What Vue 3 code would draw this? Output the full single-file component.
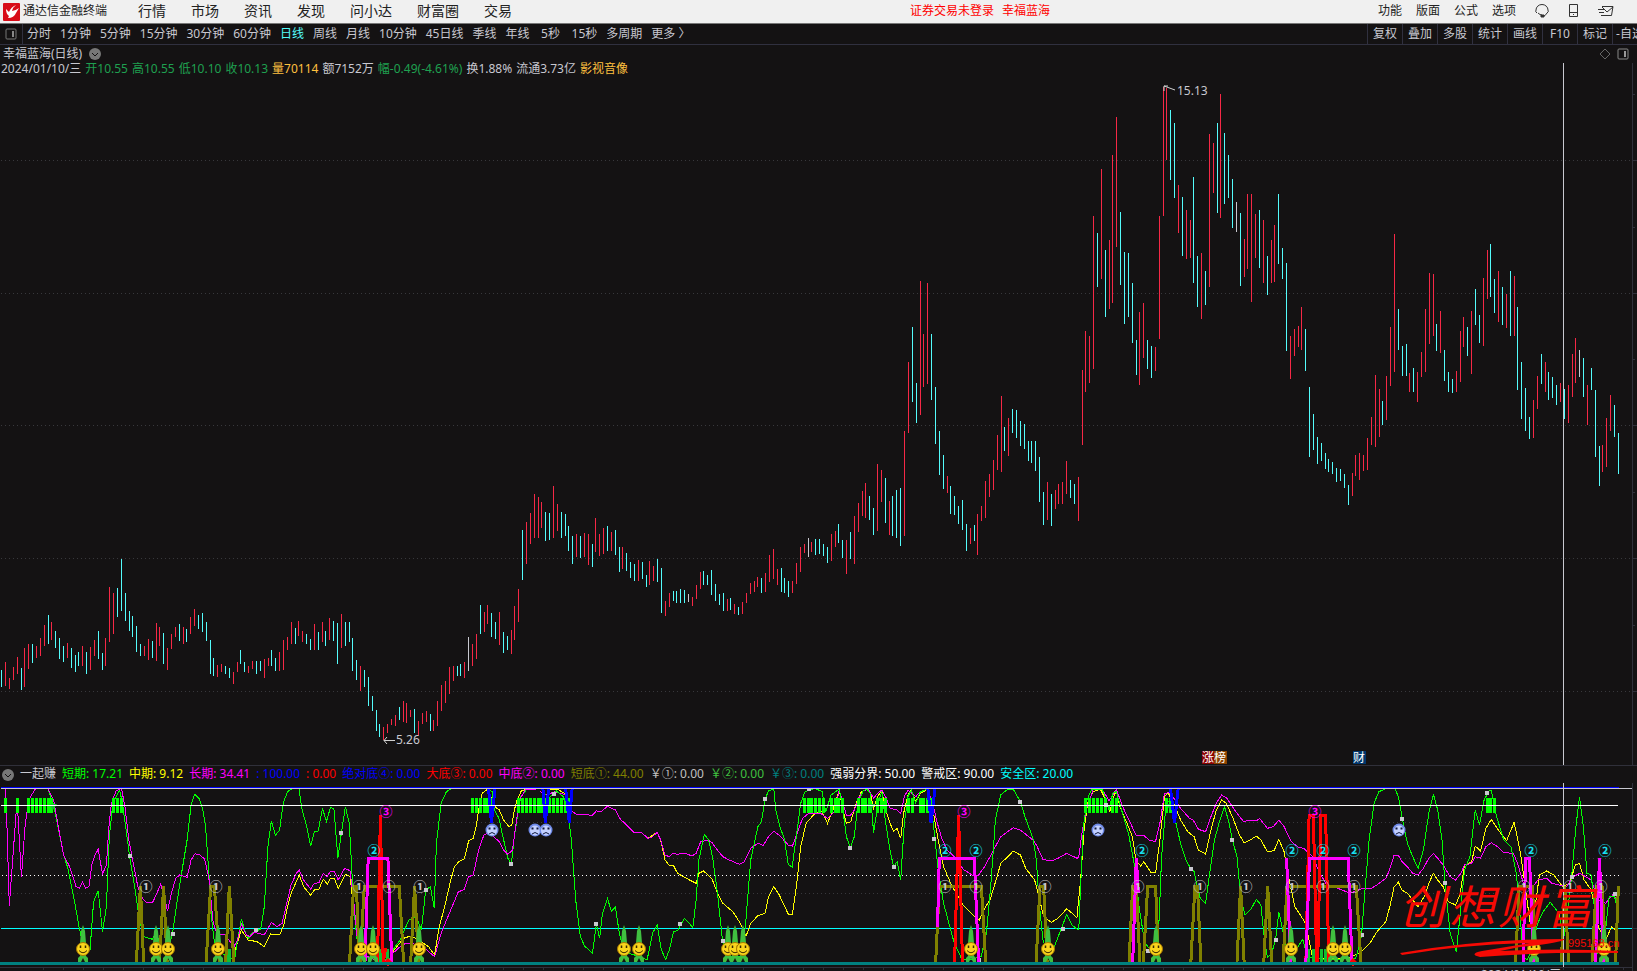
<template>
  <div class="terminal">
    <header class="titlebar">
      <svg class="logo" viewBox="0 0 17 18" aria-hidden="true">
        <rect width="17" height="18" rx="1" fill="#d80c18" />
        <path d="M13 2 Q8 4 6 9 L3 6 Q3 11 6 13 L5 15 Q11 15 13 10 L16 5 Q12 8 9 8 Q10 4 13 2 Z" fill="#fff" />
      </svg>
      <span class="app-name">通达信金融终端</span>
      <nav class="main-menu">
        <button v-for="m in menus" :key="m" type="button">{{ m }}</button>
      </nav>
      <div class="notice"><span>证券交易未登录</span><span>幸福蓝海</span></div>
      <nav class="side-menu">
        <button v-for="m in sideMenus" :key="m" type="button">{{ m }}</button>
      </nav>
      <div class="title-icons">
        <button type="button" aria-label="客服">
          <svg width="16" height="16" viewBox="0 0 16 16" fill="none" stroke="#333">
            <path d="M3 10 Q1 9 2 7 A6 5.500 0 0 1 14 7 Q15 9 13 10 M4 10 Q6 12 8 12 M13 10 Q12 12 10 13" />
            <path d="M7 12 h3 v2 h-3 Z" fill="#333" />
          </svg>
        </button>
        <button type="button" aria-label="手机">
          <svg width="16" height="16" viewBox="0 0 16 16" fill="none" stroke="#333">
            <path d="M3.500 1.500 h8 v12 h-8 Z M3.500 9.500 h8 M7 11.500 h1" />
          </svg>
        </button>
        <button type="button" aria-label="邮件">
          <svg width="16" height="16" viewBox="0 0 16 16" fill="none" stroke="#333">
            <path d="M4 3.500 H15 L13.500 12.500 H3 M4 4 L9 9 L15 4 M0 6.500 h6 M1 9.500 h5" />
          </svg>
        </button>
      </div>
    </header>

    <div class="toolbar">
      <button class="pane-btn" type="button" aria-label="侧栏">
        <svg width="12" height="12" viewBox="0 0 12 12">
          <rect x="1" y="1" width="10" height="10" rx="1" fill="none" stroke="#777" />
          <rect x="7" y="3" width="2" height="6" fill="#888" />
        </svg>
      </button>
      <div class="periods">
        <button
          v-for="p in periods"
          :key="p"
          type="button"
          :class="{ active: p === '日线' }"
        >{{ p }}</button>
      </div>
      <div class="tools">
        <button v-for="t in tools" :key="t" type="button">{{ t }}</button>
      </div>
    </div>

    <main>
      <section class="price-panel">
        <div class="stock-title">
          <span>幸福蓝海(日线)</span>
          <svg class="chevron" viewBox="0 0 12 12" aria-hidden="true">
            <circle cx="6" cy="6" r="6" fill="#777" />
            <path d="M3 5 L6 8 L9 5" fill="none" stroke="#141213" />
          </svg>
          <svg class="corner" width="30" height="12" viewBox="0 0 30 12" fill="none" aria-hidden="true">
            <path d="M6 1 L11 6 L6 11 L1 6 Z" stroke="#666" />
            <rect x="19" y="1" width="10" height="10" rx="1" stroke="#888" />
            <rect x="25" y="3" width="2" height="6" fill="#999" />
          </svg>
        </div>
        <div class="quote">
          <span v-for="q in quote" :key="q.text" :class="q.tone">{{ q.text }}</span>
        </div>
        <svg class="canvas" viewBox="0 63 1637 702">
          <g class="grid">
            <line v-for="y in [160, 293, 425, 558, 691]" :key="y" x1="1" x2="1637" :y1="y + 0.5" :y2="y + 0.5" />
          </g>
          <g class="bars">
            <rect
              v-for="b in candles"
              :key="b.x"
              :x="b.x"
              :y="b.top"
              width="1"
              :height="b.height"
              :class="b.tone"
            />
          </g>
          <path class="frame" d="M1632.500 63 V765 M1633 94.500 h2 M1633 160.500 h4 M1633 227.500 h2 M1633 293.500 h4 M1633 359.500 h2 M1633 425.500 h4 M1633 492.500 h2 M1633 558.500 h4 M1633 625.500 h2 M1633 691.500 h4" />
          <line class="cross" x1="1563.500" x2="1563.500" y1="63" y2="765" />
          <path class="pointer" d="M1164 86 L1175 90 M1164 91 V86 H1168 M384 740.500 H395 M387 737 L384 740.500 L387 744" />
          <text class="mark" x="1177" y="95">15.13</text>
          <text class="mark" x="396" y="744">5.26</text>
          <g class="badges">
            <rect x="1202" y="751" width="12" height="13" fill="#8b0000" />
            <rect x="1214" y="751" width="13" height="13" fill="#8a4200" />
            <rect x="1353" y="751" width="13" height="13" fill="#00376e" />
            <text x="1202" y="762">涨榜</text>
            <text x="1353" y="762">财</text>
          </g>
        </svg>
      </section>

      <section class="indicator-panel">
        <div class="legend">
          <svg class="chevron" viewBox="0 0 12 12" aria-hidden="true">
            <circle cx="6" cy="6" r="6" fill="#777" />
            <path d="M3 5 L6 8 L9 5" fill="none" stroke="#141213" />
          </svg>
          <span v-for="l in legend" :key="l[0]" :style="{ color: l[1] }">{{ l[0] }}</span>
        </div>
        <svg class="canvas" viewBox="0 783 1637 188">
          <g class="grid">
            <line v-for="y in [822, 858, 893]" :key="y" x1="1" x2="1637" :y1="y + 0.5" :y2="y + 0.5" />
          </g>
          <line class="half" x1="2" x2="1620" y1="875.500" y2="875.500" />
          <rect x="1" y="928" width="1631" height="1" fill="#0ff" />

          <g class="curves">
            <polyline v-for="(c, i) in curves" :key="i" :points="c.points" :stroke="c.color" />
          </g>
          <g class="blocks">
            <rect v-for="x in hotBars" :key="x" :x="x" y="798" width="3" height="15" />
          </g>
          <g fill="#10c030">
            <path v-for="x in [53, 545, 871, 1170]" :key="x" :d="`M${x - 4} 804 h8 l-4 6 Z`" />
            <path d="M227 949 h4 v13 h-4 Z M379 949 h3 v13 h-3 Z M386 949 h3 v13 h-3 Z M1307 949 h3 v13 h-3 Z M1312 949 h3 v13 h-3 Z M1320 949 h3 v13 h-3 Z M1324 949 h3 v13 h-3 Z" />
          </g>
          <g class="dots">
            <rect v-for="(d, i) in dots" :key="i" :x="d.x - 2" :y="d.y - 2" width="4" height="4" />
          </g>
          <g class="towers">
            <polyline v-for="(t, i) in towers" :key="i" :points="t.points" :stroke="t.color" />
          </g>
          <path d="M384 962 l4 -4 l4 4 Z M1349 962 l4 -4 l4 4 Z M387 964 h2 v2 h-2 Z M1352 964 h2 v2 h-2 Z" fill="red" />

          <rect x="1" y="787" width="1618" height="1" fill="#00f" />
          <rect x="1" y="788" width="1631" height="1" fill="#c8c8d0" />
          <rect x="1" y="805" width="1617" height="1" fill="#fff" />
          <rect x="0" y="962" width="1619" height="3" fill="#008080" />

          <g v-for="x in smiles" :key="'s' + x" :transform="`translate(${x} 949)`">
            <path d="M0 -24 L2 -18 L3 -6 L3 7 L5 9 V13 H2 L0 9 L-2 13 H-5 V9 L-3 7 L-3 -6 L-2 -18 Z" fill="#40c040" />
            <circle r="6.500" fill="#fbd51c" stroke="#a87800" />
            <path d="M-2.500 -3.500 V-1 M2.500 -3.500 V-1" stroke="#3a2a00" stroke-width="1.500" />
            <path d="M-4 1.500 Q0 6 4 1.500" stroke="#3a2a00" fill="none" />
          </g>
          <g v-for="x in frowns" :key="'f' + x" :transform="`translate(${x} 830)`">
            <circle r="6.500" fill="#6f8ae8" />
            <ellipse cy="0.500" rx="5" ry="5" fill="#c3d0ff" />
            <path d="M-3.500 -1.500 h2 M1.500 -1.500 h2" stroke="#101840" stroke-width="2" />
            <path d="M-3 4 Q0 1 3 4" stroke="#101840" fill="none" />
          </g>

          <g class="rank">
            <text v-for="x in rank1" :key="'a' + x" :x="x" y="891" fill="#c8c8d0">①</text>
            <text v-for="x in rank2" :key="'b' + x" :x="x" y="855" fill="#18e0f0">②</text>
            <text v-for="x in rank3" :key="'c' + x" :x="x" y="816" fill="#ff00ff">③</text>
          </g>

          <path class="frame" :d="timeTicks" />
          <path class="frame" d="M1632.500 783 V971 M1633 822.500 h4 M1633 858.500 h4 M1633 893.500 h4 M1633 928.500 h4" />
          <line class="cross" x1="1563.500" x2="1563.500" y1="783" y2="967" />
          <text class="cursor-date" x="1481" y="979">2024/01/10/三</text>

          <g fill="#f60a04">
            <text v-for="b in brand" :key="b.char" class="brand" :x="b.x" y="924">{{ b.char }}</text>
            <path d="M1400 953 Q1480 939 1565 939 Q1562 943 1520 947 L1500 951 Q1560 948 1618 951 V953 Q1540 952 1480 957 Q1468 954 1482 951 L1530 943 Q1460 945 1402 955 Z" />
            <text class="site" x="1568" y="947">995168.cn</text>
          </g>
        </svg>
      </section>
    </main>
  </div>
</template>

<script setup>
const menus = ['行情', '市场', '资讯', '发现', '问小达', '财富圈', '交易']
const sideMenus = ['功能', '版面', '公式', '选项']
const periods = [
  '分时', '1分钟', '5分钟', '15分钟', '30分钟', '60分钟', '日线', '周线', '月线',
  '10分钟', '45日线', '季线', '年线', '5秒', '15秒', '多周期', '更多 〉'
]
const tools = ['复权', '叠加', '多股', '统计', '画线', 'F10', '标记', '-自选']

const quote = [
  { text: '2024/01/10/三', tone: 'plain' },
  { text: '开10.55', tone: 'fall' },
  { text: '高10.55', tone: 'fall' },
  { text: '低10.10', tone: 'fall' },
  { text: '收10.13', tone: 'fall' },
  { text: '量70114', tone: 'gold' },
  { text: '额7152万', tone: 'plain' },
  { text: '幅-0.49(-4.61%)', tone: 'fall' },
  { text: '换1.88%', tone: 'plain' },
  { text: '流通3.73亿', tone: 'plain' },
  { text: '影视音像', tone: 'gold' }
]

const legend = [
  ['一起赚', '#c8c8d0'],
  ['短期: 17.21', '#00ff00'],
  ['中期: 9.12', '#ffff00'],
  ['长期: 34.41', '#ff00ff'],
  [': 100.00', '#0000ff'],
  [': 0.00', '#ff0000'],
  ['绝对底④: 0.00', '#0000ff'],
  ['大底③: 0.00', '#ff0000'],
  ['中底②: 0.00', '#ff00ff'],
  ['短底①: 44.00', '#808000'],
  ['￥①: 0.00', '#c0c0c0'],
  ['￥②: 0.00', '#40c040'],
  ['￥③: 0.00', '#008080'],
  ['强弱分界: 50.00', '#ffffff'],
  ['警戒区: 90.00', '#ffffff'],
  ['安全区: 20.00', '#00ffff']
]

const brand = [
  { char: '创', x: 1399 },
  { char: '想', x: 1449 },
  { char: '财', x: 1498 },
  { char: '富', x: 1547 }
]

// 每根K线: 涨跌(r涨 c跌 w平) + 最高点,最低点
const STEP = 3.858
const raw = `
c670,687 r662,686 r678,689 r667,680 r657,674 c668,690 r648,687 r644,669 c644,663 r646,658
r638,656 r625,646 c615,644 r622,640 c631,648 c638,659 c646,662 r643,658 c648,668 c655,672
c652,666 r646,666 c652,674 r647,670 r640,656 c631,659 c653,670 r638,666 r587,642 r593,634
c588,617 c559,611 c593,621 c611,631 c616,637 c626,652 c644,656 r646,656 r639,660 c641,658
r623,661 r627,646 c633,664 r648,670 r634,649 r627,637 c624,641 r627,644 c629,642 r617,634
r609,626 c615,629 c613,632 c622,641 c640,674 c658,676 r665,677 r664,672 c666,674 c668,678
r672,684 r662,672 c650,664 c662,672 r666,673 r661,669 c661,674 c661,671 r659,678 r658,666
c650,666 c658,671 r652,671 r640,670 r637,650 r622,644 c628,644 r621,636 r631,642 c634,644
c639,650 r624,650 c632,650 r622,642 c631,646 r618,640 c621,641 c623,664 r614,648 c622,646
c622,642 c638,671 c660,680 r666,691 c670,687 c677,706 c696,711 c710,731 c724,737 r727,740
r724,733 r719,725 r715,726 c707,720 r701,722 r703,723 r710,717 c709,733 r721,736 r713,724
r711,722 c714,731 r720,731 r701,726 r685,711 r681,703 r667,694 r666,681 c666,676 c664,676
r662,678 w637,671 r644,666 r634,659 c605,634 r612,632 r605,624 c613,637 c622,639 r612,645
c632,653 c636,650 r630,654 r606,640 r589,622 c530,580 r522,564 r513,544 r494,538 r497,538
r502,528 c512,541 c513,540 r486,538 r504,531 c512,538 c514,536 c526,551 c536,564 r534,557
c536,558 r533,557 r534,565 c544,567 r518,552 r534,556 r528,554 c526,551 r532,551 c530,555
c547,572 r547,569 c553,571 c562,578 c564,581 r560,581 c562,579 c575,587 r561,585 r566,581
c559,582 c568,613 r601,616 r593,607 c591,601 c591,603 c589,603 c590,603 w594,602 r597,606
r585,599 r572,589 c571,585 c575,585 c570,595 c584,601 c594,605 c593,611 r599,611 c598,610
r604,614 c607,615 r602,614 r593,603 r583,594 r581,592 r577,587 c578,593 r573,592 r555,582
r549,579 r569,585 c568,592 c578,593 c581,597 r581,593 r563,584 r547,572 r544,553 w538,557
r542,552 c539,555 c539,554 c544,556 c547,563 r534,561 r531,547 c524,543 c540,558 r540,574
c532,559 r516,564 r503,532 r491,516 r483,518 c496,520 c508,535 r464,531 r470,502 c478,523
r501,535 c496,536 c490,538 c488,546 r431,536 r362,433 c327,402 c383,423 r281,415 r334,387
r283,384 c334,400 c387,444 c431,475 c455,489 r476,493 c486,514 c496,515 c506,524 c500,530
c524,551 r528,544 c525,541 r514,555 r506,521 r481,518 r474,497 r460,490 r435,470 r396,472
c427,451 r418,456 c409,433 c410,438 c421,446 c424,449 c441,461 c441,463 c441,471 c457,502
c492,525 r482,520 c494,526 r490,509 r484,504 r482,504 r461,494 c480,498 c484,504 r477,521
r370,445 r331,392 r336,383 r216,369 c233,287 r169,279 c250,317 r240,309 r155,303 r117,247
c212,285 c252,324 c253,317 c283,343 c340,375 r312,385 r303,358 c340,369 c346,378 r347,371
r216,339 r87,216 r88,160 c110,180 c123,198 r185,233 c197,256 r210,259 r220,258 c177,283
c256,307 r253,319 c271,305 r134,287 r143,193 c123,213 r94,218 c133,204 c155,198 c179,228
w202,232 c213,286 r239,277 r194,269 r194,302 r214,258 c210,268 r220,283 c256,295 r240,283
r225,282 c194,264 c248,279 c263,351 r336,379 r329,356 r326,347 r307,350 c329,371 c387,457
c414,450 c437,464 c443,461 c453,469 c459,472 c462,474 c468,482 c469,481 c474,488 c485,505
r473,496 r455,476 r453,480 r455,471 r438,470 r417,445 r375,447 r389,437 c401,425 r376,420
r327,386 r234,372 c309,350 c346,376 c344,376 r373,392 c368,392 r372,402 r352,377 r309,372
r273,344 r274,336 c324,351 r311,353 c350,381 c372,392 c379,393 r371,392 r331,382 r317,347
c327,356 r311,374 c289,325 c315,343 r278,346 r250,299 c244,297 c279,313 r271,322 c287,325
r294,328 c271,336 r276,336 c307,390 c362,419 c388,431 c417,439 r400,438 r376,409 c354,384
r362,392 c372,400 c377,398 c385,405 r383,402 c389,419 r385,423 r354,397 r338,383 w350,377
c358,397 r385,425 c368,390 c390,457 c446,486 r445,472 r418,467 r395,431 c405,437 c433,474`

const tones = { r: 'up', c: 'down', w: 'flat' }
const candles = raw.trim().split(/\s+/).map((item, i) => {
  const [top, bottom] = item.slice(1).split(',').map(Number)
  return { x: Math.floor(i * STEP + 1.8), top, height: bottom - top, tone: tones[item[0]] }
})

// 指标采样分三段, 每段有自己的原点, 横向2.8格/px, 纵向3格/px
const origins = [[0, 760], [540, 760], [1077, 740]]
const place = (part, x, y) => ({
  x: Math.round((origins[part][0] + x / 2.8) * 10) / 10,
  y: Math.round((origins[part][1] + y / 3) * 10) / 10
})
const trace = (part, text) =>
  text.trim().split(/\s+/).map((p) => {
    const [x, y] = p.split(',').map(Number)
    const at = place(part, x, y)
    return `${at.x},${at.y}`
  }).join(' ')

const LIME = '#00ff00'
const YELLOW = '#ffff00'
const PINK = '#ff00ff'
const OLIVE = '#808000'

const curves = [
  [0, YELLOW, '657,575 676,510 695,540 720,545 740,560 757,522 783,525 795,495 805,440 815,400 838,345 850,380 870,406 880,390 893,388 905,358 917,372 925,355 937,357 947,385 967,343 980,350 990,440 1000,530 1012,580 1050,600 1090,600 1100,575 1130,535 1150,528 1172,540 1200,560 1217,585 1230,500 1245,440 1260,370 1272,320 1285,305 1300,297 1312,243 1325,235 1333,200 1340,150 1350,100 1367,86 1378,120 1390,145 1397,148 1410,180 1425,200 1433,195 1440,150 1448,120 1460,92 1480,87 1512,86'],
  [0, LIME, '133,83 150,135 165,215 178,285 190,325 208,420 222,505 235,565 252,570 262,425 275,392 287,515 298,440 306,230 316,130 335,90 343,130 363,288 380,400 390,480 403,530 427,538 437,515 450,560 470,570 483,522 495,430 510,330 524,240 535,135 545,103 557,115 567,145 575,195 585,340 592,470 600,545 620,580 657,600 665,540 676,478 688,520 695,536 705,520 718,512 730,508 740,440 750,260 760,182 771,226 783,210 793,130 805,95 820,85 837,85 846,150 858,195 870,258 880,215 891,213 903,145 914,185 925,143 935,145 946,295 956,218 967,140 978,190 985,330 992,460 1000,540 1020,590 1090,600 1100,570 1120,540 1145,480 1165,470 1180,510 1192,390 1205,380 1216,445 1222,250 1235,130 1250,95 1265,85 1365,85 1378,95 1385,150 1397,175 1408,230 1422,295 1432,313 1440,230 1450,160 1458,110 1475,88 1512,85'],
  [0, PINK, '14,85 20,210 26,437 48,118 60,352 70,200 80,120 100,85 133,83 150,120 165,210 178,285 195,320 213,380 222,385 231,365 240,385 249,380 258,310 266,285 275,268 287,342 298,315 305,200 312,130 325,92 340,85 350,140 360,235 375,320 385,375 395,410 410,427 427,428 437,405 450,372 460,410 469,453 480,400 492,355 503,345 524,352 535,300 546,281 560,285 573,297 585,355 597,490 608,520 630,525 655,560 665,540 676,492 690,525 700,530 712,517 740,524 760,487 775,500 790,490 805,420 815,375 830,340 838,330 850,360 870,387 880,370 893,368 905,340 915,350 925,335 937,335 947,360 965,325 980,332 990,420 1000,530 1010,580 1050,600 1090,600 1100,580 1115,565 1135,550 1155,550 1175,560 1195,570 1217,590 1235,520 1260,455 1283,396 1300,388 1312,350 1325,345 1340,270 1355,225 1365,220 1380,228 1398,245 1410,270 1422,283 1435,270 1445,190 1455,120 1470,90 1512,86'],
  [1, YELLOW, '0,86 50,88 75,105 85,150 100,162 147,166 158,152 170,156 189,139 211,150 225,178 240,192 265,219 285,218 302,235 328,217 338,240 350,300 362,316 374,317 385,340 404,352 437,370 445,340 458,333 482,357 497,400 512,430 540,455 558,485 577,528 590,490 610,467 630,460 640,410 655,380 670,405 695,462 707,462 718,380 730,260 745,190 770,160 790,155 805,190 820,150 838,90 848,150 858,190 870,185 885,130 900,95 915,88 925,100 934,145 945,110 957,92 968,150 980,190 990,213 1000,206 1010,235 1018,160 1030,105 1040,90 1052,125 1065,100 1085,88 1100,150 1115,240 1130,320 1150,370 1165,400 1185,435 1210,463 1230,480 1245,445 1260,420 1280,350 1290,310 1310,290 1325,273 1345,285 1360,325 1385,360 1395,400 1410,470 1432,487 1450,475 1475,446 1490,460 1504,473'],
  [1, PINK, '0,95 20,105 40,95 75,105 85,150 100,162 147,166 158,152 170,156 189,139 211,150 225,178 240,192 265,219 285,218 302,235 315,230 328,217 338,240 350,285 362,290 372,280 385,283 404,279 426,288 437,280 450,245 470,240 482,248 495,268 512,290 530,300 558,313 572,305 590,265 610,250 625,256 640,230 655,214 672,228 695,255 707,258 720,220 735,175 750,162 785,160 805,175 825,155 838,90 848,130 858,165 870,165 880,150 892,115 905,92 920,88 934,115 945,100 957,90 970,115 980,145 1000,150 1010,160 1020,110 1030,90 1052,110 1065,95 1085,88 1100,130 1110,180 1125,235 1140,270 1165,295 1185,328 1210,345 1228,345 1245,320 1270,270 1290,230 1325,203 1345,210 1380,240 1390,255 1408,298 1432,303 1450,295 1475,280 1504,295'],
  [1, LIME, '8,95 25,115 45,92 65,110 78,160 88,240 100,420 113,530 125,558 147,580 158,492 167,535 175,460 189,415 200,455 211,440 222,520 235,575 280,590 300,600 315,520 328,495 340,570 352,598 362,570 374,515 385,512 404,475 428,502 437,420 445,300 460,223 472,240 483,290 497,400 510,530 520,590 560,590 575,500 590,300 610,200 620,185 630,118 640,92 655,88 660,150 672,200 685,240 695,313 706,322 715,250 730,130 742,95 770,85 790,95 800,155 815,105 838,87 848,150 858,230 869,264 880,230 890,130 905,92 915,88 925,100 934,218 945,140 957,92 968,190 980,270 990,321 1000,305 1010,360 1020,190 1030,110 1040,90 1052,128 1065,95 1085,88 1095,130 1106,237 1115,330 1130,430 1145,490 1160,550 1180,595 1200,600 1235,590 1250,520 1262,380 1275,180 1290,105 1310,87 1325,87 1345,125 1358,170 1380,235 1390,300 1397,420 1408,540 1420,570 1440,560 1475,463 1490,495 1504,508'],
  [2, YELLOW, '0,530 10,420 20,270 30,190 45,155 65,147 78,175 92,215 100,180 110,150 120,200 140,250 155,290 165,360 178,378 187,365 207,397 220,398 232,300 245,170 255,158 275,200 290,240 310,275 328,290 340,330 360,342 375,270 390,210 405,180 418,190 435,230 455,285 468,308 485,300 502,288 515,300 533,335 552,332 565,298 580,335 590,400 610,500 640,550 650,600 660,655 760,655 797,635 820,610 840,575 865,545 878,490 888,440 900,427 910,450 925,460 955,500 975,465 985,430 998,400 1010,420 1025,440 1040,485 1060,495 1072,465 1085,375 1105,365 1115,318 1130,333 1145,265 1160,238 1180,270 1203,302 1224,247 1240,330 1250,400 1270,560 1280,520 1295,405 1315,393 1335,405 1360,440 1380,430 1395,375 1407,370 1420,420 1440,450 1460,560 1480,600 1497,560 1515,575'],
  [2, PINK, '0,355 5,350 15,270 28,200 45,150 70,147 90,182 110,148 130,205 150,250 165,285 185,285 205,302 220,304 232,250 245,160 258,158 275,180 290,205 315,235 325,240 340,268 360,275 375,230 390,190 405,165 420,175 437,203 455,230 468,246 480,240 502,242 512,236 533,265 550,260 565,240 580,260 600,305 620,322 635,325 660,350 680,400 700,435 730,445 765,460 800,445 820,447 840,435 865,415 875,390 888,346 900,346 910,365 925,380 940,400 955,405 970,385 985,355 998,340 1010,355 1025,375 1045,410 1060,420 1075,400 1085,375 1105,370 1115,350 1130,355 1145,320 1160,308 1180,322 1195,338 1222,340 1235,375 1250,430 1270,450 1290,420 1315,415 1330,430 1370,440 1390,410 1408,400 1440,420 1460,480 1480,490 1500,465 1515,480'],
  [2, LIME, '0,568 5,568 10,440 18,260 28,180 40,150 70,147 80,175 90,210 100,160 110,155 125,210 145,285 160,370 175,510 190,610 215,640 230,540 237,350 250,180 262,190 275,240 290,310 305,360 318,385 328,395 335,430 345,475 360,490 372,395 385,300 400,240 413,200 425,245 435,300 448,350 458,470 470,525 487,508 502,478 515,495 525,600 533,652 545,640 556,600 565,515 578,580 590,640 610,635 632,598 645,650 700,660 780,655 790,620 797,585 805,470 818,300 832,190 845,155 865,146 890,146 900,170 911,237 925,310 940,350 955,385 970,330 985,220 998,163 1010,210 1022,300 1030,430 1045,580 1062,637 1072,530 1085,390 1100,350 1115,210 1127,255 1140,180 1155,150 1160,150 1175,230 1195,300 1215,320 1230,400 1237,480 1250,650 1260,660 1270,640 1290,550 1305,515 1325,487 1350,520 1362,600 1375,500 1385,410 1397,260 1407,172 1418,260 1428,400 1440,405 1450,520 1458,640 1475,620 1490,470 1505,468 1515,520']
].map(([part, color, text]) => ({ color, points: trace(part, text) }))

const towers = [
  [0, OLIVE, '382,606 393,378 402,606'],
  [0, OLIVE, '447,606 458,378 468,606'],
  [0, OLIVE, '577,606 590,378 600,378 615,606'],
  [0, OLIVE, '632,606 642,378 655,606'],
  [0, OLIVE, '979,606 990,378 998,378 1006,606'],
  [0, OLIVE, '1008,606 1020,380 1118,380 1130,606'],
  [0, OLIVE, '1150,606 1161,378 1172,606'],
  [1, OLIVE, '1108,606 1118,380 1236,380 1248,606'],
  [1, OLIVE, '1389,606 1400,378 1410,378 1420,606'],
  [2, OLIVE, '146,665 156,438 166,438 176,665'],
  [2, OLIVE, '186,665 198,438 220,438 228,665'],
  [2, OLIVE, '319,665 330,438 337,438 347,665'],
  [2, OLIVE, '448,665 458,438 468,665'],
  [2, OLIVE, '523,665 534,438 545,665'],
  [2, OLIVE, '577,665 588,440 782,440 795,665'],
  [2, OLIVE, '1228,665 1238,438 1275,438 1285,665'],
  [2, OLIVE, '1356,665 1366,438 1376,665'],
  [2, OLIVE, '1442,665 1454,438 1470,438 1482,665'],
  [2, OLIVE, '1508,665 1516,438'],
  [0, 'red', '1057,606 1065,165 1073,606 1080,565'],
  [1, 'red', '1161,606 1172,165 1183,606'],
  [2, 'red', '641,665 650,227 662,227 671,665 674,665 683,227 696,227 705,665'],
  [0, PINK, '1022,606 1031,295 1086,295 1097,606'],
  [1, PINK, '1113,500 1118,295 1216,295 1228,606'],
  [2, PINK, '156,665 166,355 172,460'],
  [2, PINK, '587,355 590,440 598,665'],
  [2, PINK, '641,665 651,355 759,355 770,665'],
  [2, PINK, '1249,665 1256,355 1267,355 1278,665'],
  [2, PINK, '1452,665 1463,355 1474,665'],
  [0, 'blue', '1368,86 1376,188 1386,86'],
  [0, 'blue', '1520,86 1527,188 1536,86'],
  [1, 'blue', '72,86 82,188 90,86'],
  [1, 'blue', '1086,86 1095,188 1106,86'],
  [2, 'blue', '262,148 273,248 283,148']
].map(([part, color, text]) => ({ color, points: trace(part, text) }))

const dots = [
  [0, 363, 288], [0, 483, 522], [0, 718, 510], [0, 956, 218], [0, 1192, 390], [0, 1432, 312], [0, 1550, 103],
  [1, 158, 492], [1, 392, 492], [1, 512, 543], [1, 630, 117], [1, 752, 87], [1, 869, 264], [1, 990, 321],
  [1, 1104, 237], [1, 1345, 126], [1, 1463, 508], [1, 1228, 600],
  [2, 80, 195], [2, 318, 387], [2, 435, 300], [2, 556, 600], [2, 797, 585], [2, 911, 237], [2, 1030, 428],
  [2, 1149, 158], [2, 1386, 411], [2, 1506, 463], [2, 198, 632]
].map(([part, x, y]) => place(part, x, y))

// 警戒区以上的K线位置
const hotRanges = [
  [4, 7], [16, 19], [27, 54], [112, 124], [471, 492], [517, 568], [802, 826], [829, 842], [857, 872],
  [876, 885], [906, 914], [919, 933], [1085, 1108], [1112, 1119], [1166, 1173], [1486, 1494]
]
const hotBars = candles
  .filter((b) => hotRanges.some(([from, to]) => b.x >= from && b.x <= to))
  .map((b) => b.x - 1)

const smiles = [83, 156, 168, 218, 361, 373, 419, 624, 639, 728, 735, 743, 971, 1048, 1156, 1291, 1333, 1345, 1534, 1604]
const frowns = [492, 535, 546, 1098, 1399]
const rank1 = [146, 216, 359, 389, 420, 945, 976, 1045, 1138, 1200, 1246, 1292, 1323, 1354, 1524, 1570, 1601]
const rank2 = [374, 945, 976, 1142, 1292, 1323, 1354, 1531, 1605]
const rank3 = [386, 964, 1315]

let timeTicks = 'M0 967.500 H1632'
for (let x = 43; x < 1630; x += 20) {
  timeTicks += ` M${x}.5 968 v2`
}
</script>

<style>
body {
  background: #141213;
}
</style>

<style scoped>
.terminal {
  background: #141213;
  color: #c8c8d0;
  font-family: "Noto Sans", "Noto Sans CJK SC", sans-serif;
  font-size: 12px;
  line-height: 16px;
  overflow: hidden;
}

button {
  padding: 0;
  border: 0;
  background: none;
  color: inherit;
  font: inherit;
  white-space: nowrap;
  cursor: pointer;
}

.titlebar {
  display: flex;
  align-items: center;
  height: 23px;
  border-bottom: 1px solid #777;
  background: #f0f0f0;
  color: #222;
  position: relative;
}

.logo {
  width: 17px;
  height: 18px;
  margin: 0 3px;
}

.main-menu {
  display: flex;
  gap: 25px;
  margin-left: 31px;
  font-size: 14px;
}

.app-name,
.main-menu,
.notice,
.side-menu {
  padding-bottom: 2px;
}

.notice {
  position: absolute;
  left: 910px;
  display: flex;
  gap: 8px;
  color: #f00;
}

.side-menu {
  display: flex;
  gap: 14px;
  margin-left: auto;
}

.title-icons {
  display: flex;
  gap: 16px;
  margin: 0 23px 2px 18px;
}

.title-icons button,
.pane-btn {
  display: flex;
  align-items: center;
  justify-content: center;
}

.toolbar {
  display: flex;
  height: 20px;
  border-bottom: 1px solid #30303f;
}

.pane-btn {
  width: 23px;
  border-right: 1px solid #30303f;
}

.periods {
  display: flex;
  gap: 9px;
  margin-left: 4px;
}

.periods button {
  min-width: 24px;
}

.periods .active {
  color: #54fcfc;
}

.tools {
  display: flex;
  width: 270px;
  margin-left: auto;
  overflow: hidden;
}

.tools button {
  flex: 0 0 35px;
  border-left: 1px solid #30303f;
}

.price-panel {
  position: relative;
  border-bottom: 1px solid #30303a;
}

.stock-title {
  display: flex;
  align-items: center;
  gap: 7px;
  height: 18px;
  padding: 0 8px 0 3px;
}

.corner {
  margin-left: auto;
}

.chevron {
  width: 12px;
  height: 12px;
}

.quote {
  position: absolute;
  top: 16px;
  left: 1px;
  display: flex;
  gap: 4px;
}

.fall {
  color: #1fa050;
}

.gold {
  color: #ffc040;
}

.legend {
  display: flex;
  align-items: center;
  gap: 6px;
  height: 17px;
  padding-left: 2px;
  white-space: pre;
}

.legend span {
  padding-bottom: 2px;
}

.canvas {
  display: block;
  width: 100%;
  height: auto;
}

.grid line {
  stroke: #38383c;
  stroke-dasharray: 1 3;
  shape-rendering: crispEdges;
}

.half {
  stroke: #fff;
  stroke-dasharray: 1 3;
  shape-rendering: crispEdges;
}

.bars,
.blocks,
.dots {
  shape-rendering: crispEdges;
}

.up {
  fill: #f62846;
}

.down {
  fill: #54fcfc;
}

.flat,
.dots {
  fill: #c8c8d0;
}

.blocks {
  fill: #0f0;
}

.frame {
  fill: none;
  stroke: #30303a;
}

.cross {
  stroke: #c8c8d0;
}

.pointer {
  fill: none;
  stroke: #d0d0d0;
}

.mark,
.cursor-date {
  fill: #c8c8d0;
}

.badges text {
  fill: #fff;
}

.curves {
  fill: none;
  shape-rendering: crispEdges;
}

.towers {
  fill: none;
  stroke-width: 3px;
  shape-rendering: crispEdges;
}

.rank {
  font-family: "Noto Sans CJK SC", sans-serif;
  font-size: 13px;
  font-weight: 700;
  text-anchor: middle;
}

.brand {
  font-size: 46px;
  font-style: italic;
}

.site {
  font-family: "Liberation Sans", sans-serif;
  font-size: 11px;
}
</style>
